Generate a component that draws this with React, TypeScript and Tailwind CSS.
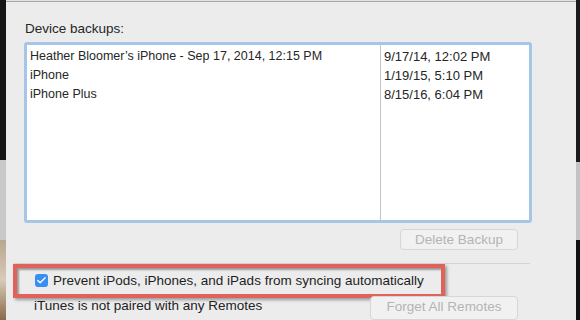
import { Check } from "lucide-react";

const rows = [
  { name: "Heather Bloomer’s iPhone - Sep 17, 2014, 12:15 PM", date: "9/17/14, 12:02 PM" },
  { name: "iPhone", date: "1/19/15, 5:10 PM" },
  { name: "iPhone Plus", date: "8/15/16, 6:04 PM" },
];

export default function App() {
  return (
    <div
      className="w-[580px] h-[320px] flex overflow-hidden text-[#262626]"
      style={{ fontFamily: '"Liberation Sans", Arial, sans-serif' }}
    >
      {/* left edge of the desktop behind */}
      <div className="w-[6px] flex flex-col">
        <div className="h-[160px] bg-[#161616]" />
        <div className="h-[80px] bg-[#c9c9c9]" />
        <div className="flex-1 bg-gradient-to-b from-[#b9a690] via-[#d8cbb8] to-[#8a6a4c]" />
      </div>

      {/* dialog */}
      <div className="flex-1 bg-[#ececec] flex flex-col">
        <div className="h-px bg-[#e2e2e2]" />
        <div className="h-px bg-[#a8a8a8]" />

        <div className="pl-[19px] pt-[19px] text-[13.5px] leading-[16px]">Device backups:</div>

        <div className="ml-[18px] mt-[5px] w-[508px] h-[185px] rounded-[3px] border-[3px] border-[#a6c6e8] bg-white flex">
          <div className="w-[354px] border-r border-[#c4c4c4] pt-[2px] pl-[3px]">
            {rows.map((r) => (
              <div key={r.name} className="h-[19px] text-[12.5px] leading-[19px] whitespace-nowrap">
                {r.name}
              </div>
            ))}
          </div>
          <div className="flex-1 pt-[2px] pl-[3px]">
            {rows.map((r) => (
              <div key={r.date} className="h-[19px] text-[13px] leading-[19px] whitespace-nowrap">
                {r.date}
              </div>
            ))}
          </div>
        </div>

        <div className="ml-[394px] mt-[6px] w-[118px] h-[21px] rounded-[4px] border border-[#d6d6d6] bg-[#f1f1f1] text-[13.5px] leading-[19px] text-center text-[#b4b4b4]">
          Delete Backup
        </div>

        <div className="ml-[8px] mt-[13px] w-[516px] h-px bg-[#d4d4d4]" />

        <div className="ml-[7px] w-[432px] h-[35px] border-4 border-[#e0625a] shadow-[inset_2px_2px_2px_rgba(0,0,0,0.35),2px_2px_3px_rgba(0,0,0,0.35)] flex items-center pl-[18px] gap-[5px]">
          <div className="w-[13px] h-[13px] rounded-[3px] bg-[#3a8ef2] flex items-center justify-center">
            <Check size={11} strokeWidth={3} className="text-white" />
          </div>
          <span className="text-[13.5px] leading-[16px] text-[#1e1e1e] whitespace-nowrap">
            Prevent iPods, iPhones, and iPads from syncing automatically
          </span>
        </div>

        <div className="flex items-start -mt-[2px]">
          <div className="pl-[28px] pt-[2px] text-[13.5px] leading-[16px] text-[#222222] whitespace-nowrap">
            iTunes is not paired with any Remotes
          </div>
          <div className="ml-auto mr-[58px] w-[148px] h-[24px] rounded-[4px] border border-[#d6d6d6] bg-[#f1f1f1] text-[13.5px] leading-[20px] text-center text-[#b4b4b4]">
            Forget All Remotes
          </div>
        </div>
      </div>

      {/* right edge */}
      <div className="w-[4px] flex flex-col">
        <div className="h-[162px] bg-[#1b1b1b]" />
        <div className="h-[78px] bg-[#c2c2c2]" />
        <div className="flex-1 bg-[#121212]" />
      </div>
    </div>
  );
}
